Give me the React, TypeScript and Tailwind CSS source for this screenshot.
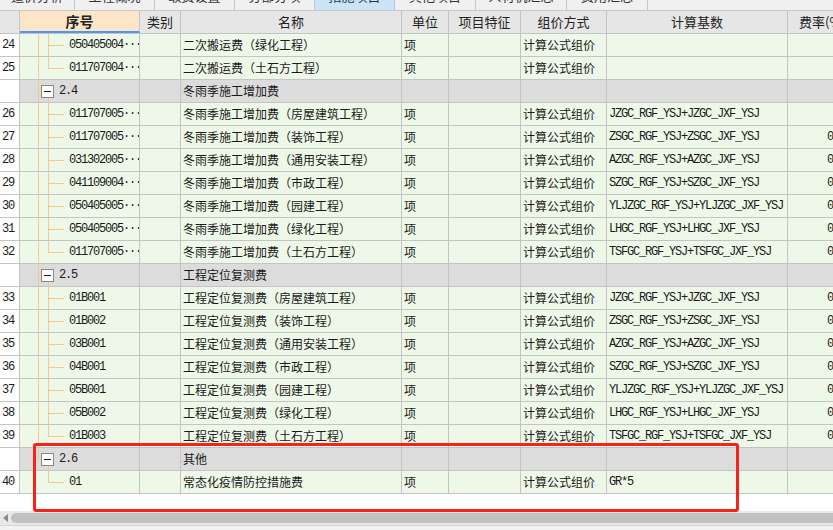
import React from 'react';

type Row =
  | { kind: 'group'; code: string; name: string; last?: boolean }
  | {
      kind: 'leaf';
      no: number;
      code: string;
      name: string;
      base: string;
      rate?: string;
      lastChild?: boolean;
      lastBranch?: boolean;
    };

const rows: Row[] = [
  { kind: 'leaf', no: 24, code: '050405004···', name: '二次搬运费（绿化工程）', base: '' },
  { kind: 'leaf', no: 25, code: '011707004···', name: '二次搬运费（土石方工程）', base: '', lastChild: true },
  { kind: 'group', code: '2.4', name: '冬雨季施工增加费' },
  { kind: 'leaf', no: 26, code: '011707005···', name: '冬雨季施工增加费（房屋建筑工程）', base: 'JZGC_RGF_YSJ+JZGC_JXF_YSJ' },
  { kind: 'leaf', no: 27, code: '011707005···', name: '冬雨季施工增加费（装饰工程）', base: 'ZSGC_RGF_YSJ+ZSGC_JXF_YSJ', rate: '0' },
  { kind: 'leaf', no: 28, code: '031302005···', name: '冬雨季施工增加费（通用安装工程）', base: 'AZGC_RGF_YSJ+AZGC_JXF_YSJ', rate: '0' },
  { kind: 'leaf', no: 29, code: '041109004···', name: '冬雨季施工增加费（市政工程）', base: 'SZGC_RGF_YSJ+SZGC_JXF_YSJ', rate: '0' },
  { kind: 'leaf', no: 30, code: '050405005···', name: '冬雨季施工增加费（园建工程）', base: 'YLJZGC_RGF_YSJ+YLJZGC_JXF_YSJ', rate: '0' },
  { kind: 'leaf', no: 31, code: '050405005···', name: '冬雨季施工增加费（绿化工程）', base: 'LHGC_RGF_YSJ+LHGC_JXF_YSJ', rate: '0' },
  { kind: 'leaf', no: 32, code: '011707005···', name: '冬雨季施工增加费（土石方工程）', base: 'TSFGC_RGF_YSJ+TSFGC_JXF_YSJ', rate: '0', lastChild: true },
  { kind: 'group', code: '2.5', name: '工程定位复测费' },
  { kind: 'leaf', no: 33, code: '01B001', name: '工程定位复测费（房屋建筑工程）', base: 'JZGC_RGF_YSJ+JZGC_JXF_YSJ', rate: '0' },
  { kind: 'leaf', no: 34, code: '01B002', name: '工程定位复测费（装饰工程）', base: 'ZSGC_RGF_YSJ+ZSGC_JXF_YSJ', rate: '0' },
  { kind: 'leaf', no: 35, code: '03B001', name: '工程定位复测费（通用安装工程）', base: 'AZGC_RGF_YSJ+AZGC_JXF_YSJ', rate: '0' },
  { kind: 'leaf', no: 36, code: '04B001', name: '工程定位复测费（市政工程）', base: 'SZGC_RGF_YSJ+SZGC_JXF_YSJ', rate: '0' },
  { kind: 'leaf', no: 37, code: '05B001', name: '工程定位复测费（园建工程）', base: 'YLJZGC_RGF_YSJ+YLJZGC_JXF_YSJ', rate: '0' },
  { kind: 'leaf', no: 38, code: '05B002', name: '工程定位复测费（绿化工程）', base: 'LHGC_RGF_YSJ+LHGC_JXF_YSJ', rate: '0' },
  { kind: 'leaf', no: 39, code: '01B003', name: '工程定位复测费（土石方工程）', base: 'TSFGC_RGF_YSJ+TSFGC_JXF_YSJ', rate: '0', lastChild: true },
  { kind: 'group', code: '2.6', name: '其他', last: true },
  { kind: 'leaf', no: 40, code: '01', name: '常态化疫情防控措施费', base: 'GR*5', lastChild: true, lastBranch: true },
];

const tabs = [
  { label: '造价分析', w: 'w-[75px]' },
  { label: '工程概况', w: 'w-[80px]' },
  { label: '取费设置', w: 'w-[80px]' },
  { label: '分部分项', w: 'w-[80px]' },
  { label: '措施项目', w: 'w-[80px]', active: true },
  { label: '其他项目', w: 'w-[81px]' },
  { label: '人材机汇总', w: 'w-[91px]' },
  { label: '费用汇总', w: 'w-[81px]' },
];

const ORANGE = '#f7c985';
const cjk = "font-['Noto_Sans_CJK_SC',sans-serif]";
const mono = "font-['Liberation_Mono',monospace] text-[12px] tracking-[-1.2px]";
const cell = 'h-full shrink-0 border-r border-[#c4c4c4] flex items-center overflow-hidden whitespace-nowrap';

const TreeLines = ({ row }: { row: Row }) => {
  if (row.kind === 'group') {
    return (
      <svg width="120" height="22" className="absolute left-0 top-0">
        <line x1="18.5" y1="0" x2="18.5" y2={row.last ? 11.5 : 22} stroke={ORANGE} />
        <line x1="18.5" y1="11.5" x2="22" y2="11.5" stroke={ORANGE} />
        <line x1="28.5" y1="17" x2="28.5" y2="22" stroke={ORANGE} />
        <rect x="21.5" y="5.5" width="12" height="12" fill="#fff" stroke="#8a8a8a" />
        <line x1="24" y1="11.5" x2="31" y2="11.5" stroke="#222" />
      </svg>
    );
  }
  return (
    <svg width="120" height="22" className="absolute left-0 top-0">
      {!row.lastBranch && <line x1="18.5" y1="0" x2="18.5" y2="22" stroke={ORANGE} />}
      <line x1="28.5" y1="0" x2="28.5" y2={row.lastChild ? 11.5 : 22} stroke={ORANGE} />
      <line x1="28.5" y1="11.5" x2="44" y2="11.5" stroke={ORANGE} />
    </svg>
  );
};

const GridRow = ({ row }: { row: Row }) => {
  const bg = row.kind === 'group' ? 'bg-[#dcdcdc]' : 'bg-[#eef8e8]';
  return (
    <div className={`flex h-[23px] border-b border-[#c4c4c4] text-[12px] text-[#1a1a1a] ${cjk}`}>
      <div className={`${cell} w-[20px] bg-white pl-[2px] ${mono}`}>{row.kind === 'leaf' ? row.no : ''}</div>
      <div className={`${cell} w-[120px] relative ${bg}`}>
        <TreeLines row={row} />
        <span className={`${mono} ${row.kind === 'group' ? 'pl-[39px]' : 'pl-[49px]'}`}>{row.code}</span>
      </div>
      <div className={`${cell} w-[41px] ${bg}`} />
      <div className={`${cell} w-[221px] pl-[2px] ${bg}`}>{row.name}</div>
      <div className={`${cell} w-[47px] pl-[2px] ${bg}`}>{row.kind === 'leaf' ? '项' : ''}</div>
      <div className={`${cell} w-[72px] ${bg}`} />
      <div className={`${cell} w-[86px] pl-[2px] ${bg}`}>{row.kind === 'leaf' ? '计算公式组价' : ''}</div>
      <div className={`${cell} w-[181px] pl-[2px] ${bg} ${mono}`}>{row.kind === 'leaf' ? row.base : ''}</div>
      <div className={`${cell} w-[80px] pl-[39px] ${bg} ${mono}`}>{row.kind === 'leaf' ? row.rate ?? '' : ''}</div>
    </div>
  );
};

export default function App() {
  return (
    <div className="relative w-[833px] h-[530px] overflow-hidden bg-white flex flex-col">
      {/* tab strip, cut off at the top */}
      <div className={`h-[10px] shrink-0 overflow-hidden bg-[#f0f0f0] flex ${cjk}`}>
        {tabs.map((t) => (
          <div
            key={t.label}
            className={`${t.w} shrink-0 h-[28px] -mt-[18px] flex items-center justify-center text-[13px] text-[#333] border-r border-[#c6c6c6] ${
              t.active ? 'bg-[#c9e4fb] text-[#3a6ea5]' : 'bg-[#f0f0f0]'
            }`}
          >
            {t.label}
          </div>
        ))}
      </div>
      <div className="h-[1px] shrink-0 bg-[#c8c8c8]" />

      {/* header */}
      <div className={`flex h-[23px] shrink-0 text-[13px] text-[#222] bg-[#e6e6e6] border-b border-[#c4c4c4] ${cjk}`}>
        <div className={`${cell} w-[20px]`} />
        <div className={`${cell} w-[120px] justify-center bg-[#fde6c8] border-b-2 border-b-[#4a98f0] font-bold text-[14px]`}>序号</div>
        <div className={`${cell} w-[41px] justify-center`}>类别</div>
        <div className={`${cell} w-[221px] justify-center`}>名称</div>
        <div className={`${cell} w-[47px] justify-center`}>单位</div>
        <div className={`${cell} w-[72px] justify-center`}>项目特征</div>
        <div className={`${cell} w-[86px] justify-center`}>组价方式</div>
        <div className={`${cell} w-[181px] justify-center`}>计算基数</div>
        <div className={`${cell} w-[80px] pl-[11px]`}>费率(%)</div>
      </div>

      {/* body */}
      <div className="flex flex-col shrink-0">
        {rows.map((r, i) => (
          <GridRow key={i} row={r} />
        ))}
      </div>
      <div className="h-[17px] shrink-0 bg-white" />

      {/* horizontal scrollbar */}
      <div className="h-[14px] shrink-0 bg-[#e9e9e9] flex items-center">
        <div className="w-[11px] flex justify-center">
          <div className="w-0 h-0 border-y-[4px] border-y-transparent border-r-[5px] border-r-[#8a8a8a]" />
        </div>
        <div className="flex-1 h-[10px] rounded-l-full bg-[#c1c1c1]" />
      </div>
      <div className="flex-1 bg-[#f2f2f2] border-t border-[#d6d6d6]" />

      {/* red annotation box */}
      <div className="absolute left-[33px] top-[443px] w-[706px] h-[69px] border-[3px] border-[#f5231a] rounded-[3px]" />
    </div>
  );
}
